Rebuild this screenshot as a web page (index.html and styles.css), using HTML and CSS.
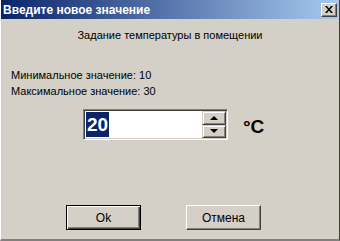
FILE: index.html
```html
<!DOCTYPE html>
<html>
<head>
<meta charset="utf-8">
<title>Введите новое значение</title>
<link rel="stylesheet" href="styles.css">
</head>
<body>
<div class="ventana">
	<div class="titulo">
		<span class="titulo-texto">Введите новое значение</span>
		<span class="cerrar">
			<svg width="8" height="7" viewBox="0 0 8 7"><path d="M0 0h2l2 2.5 2-2.5h2l-3 3.5 3 3.5h-2l-2-2.5-2 2.5h-2l3-3.5z" fill="#000"/></svg>
		</span>
	</div>
	<div class="contenido">
		<p class="encabezado">Задание температуры в помещении</p>
		<p class="linea">Минимальное значение: 10</p>
		<p class="linea">Максимальное значение: 30</p>
		<div class="fila-valor">
			<div class="campo">
				<div class="edicion"><span class="seleccion">20</span></div>
				<div class="flechas">
					<div class="flecha"><span class="tri-arriba"></span></div>
					<div class="flecha"><span class="tri-abajo"></span></div>
				</div>
			</div>
			<span class="unidad">°C</span>
		</div>
		<div class="botones">
			<button class="boton defecto">Ok</button>
			<button class="boton">Отмена</button>
		</div>
	</div>
</div>
</body>
</html>
```

FILE: styles.css
```css
* {
	margin: 0;
	padding: 0;
	box-sizing: border-box;
}
body {
	background-color: #d4d0c8;
	font-family: "Liberation Sans", Arial, sans-serif;
	font-size: 11px;
	color: #000;
}

.ventana {
	width: 340px;
	height: 241px;
	background-color: #d4d0c8;
	border-left: 1px solid #ffffff;
	border-right: 1px solid #404040;
	border-bottom: 2px solid #808080;
	display: flex;
	flex-direction: column;
}

/* barra de titulo */
.titulo {
	height: 19px;
	background: linear-gradient(to right, #0a246a 0%, #a6caf0 100%);
	display: flex;
	align-items: center;
	justify-content: space-between;
	padding: 0 2px 0 2px;
}
.titulo-texto {
	color: #fff;
	font-weight: bold;
	font-size: 12px;
}
.cerrar {
	width: 16px;
	height: 14px;
	background-color: #d4d0c8;
	border-top: 1px solid #fff;
	border-left: 1px solid #fff;
	border-right: 1px solid #404040;
	border-bottom: 1px solid #404040;
	box-shadow: inset -1px -1px 0 #808080;
	display: flex;
	align-items: center;
	justify-content: center;
	padding-right: 1px;
}
.cerrar svg {
	display: block;
}

.contenido {
	flex: 1;
	padding: 8px 0 0 10px;
}
.encabezado {
	text-align: center;
	line-height: 16px;
	padding-right: 10px;
	margin-bottom: 24px;
}
.linea {
	line-height: 16px;
}

/* campo con flechas */
.fila-valor {
	display: flex;
	align-items: flex-end;
	margin: 10px 0 0 72px;
}
.campo {
	width: 145px;
	height: 31px;
	display: flex;
	border-top: 1px solid #808080;
	border-left: 1px solid #808080;
	border-right: 1px solid #fff;
	border-bottom: 1px solid #fff;
	box-shadow: inset 1px 1px 0 #404040, inset -1px -1px 0 #d4d0c8;
	padding: 1px;
	background-color: #fff;
}
.edicion {
	flex: 1;
	padding: 1px 0 0 1px;
}
.seleccion {
	display: inline-block;
	background-color: #0a246a;
	color: #fff;
	font-weight: bold;
	font-size: 19px;
	line-height: 25px;
	padding: 0 1px;
}
.flechas {
	width: 24px;
	display: flex;
	flex-direction: column;
}
.flecha {
	flex: 1;
	background-color: #d4d0c8;
	border-top: 1px solid #d4d0c8;
	border-left: 1px solid #d4d0c8;
	border-right: 1px solid #404040;
	border-bottom: 1px solid #404040;
	box-shadow: inset 1px 1px 0 #fff, inset -1px -1px 0 #808080;
	display: flex;
	align-items: center;
	justify-content: center;
}
.tri-arriba {
	border-left: 4px solid transparent;
	border-right: 4px solid transparent;
	border-bottom: 4px solid #000;
}
.tri-abajo {
	border-left: 4px solid transparent;
	border-right: 4px solid transparent;
	border-top: 4px solid #000;
}
.unidad {
	font-weight: bold;
	font-size: 19px;
	line-height: 20px;
	margin: 0 0 3px 15px;
}

/* botones */
.botones {
	display: flex;
	gap: 45px;
	margin: 65px 0 0 55px;
}
.boton {
	width: 75px;
	height: 25px;
	font-family: "Liberation Sans", Arial, sans-serif;
	font-size: 12px;
	background-color: #d4d0c8;
	border-top: 1px solid #fff;
	border-left: 1px solid #fff;
	border-right: 1px solid #404040;
	border-bottom: 1px solid #404040;
	box-shadow: inset -1px -1px 0 #808080;
}
.defecto {
	border: 1px solid #000;
	box-shadow: inset 1px 1px 0 #fff, inset -1px -1px 0 #404040, inset -2px -2px 0 #808080;
}
```
